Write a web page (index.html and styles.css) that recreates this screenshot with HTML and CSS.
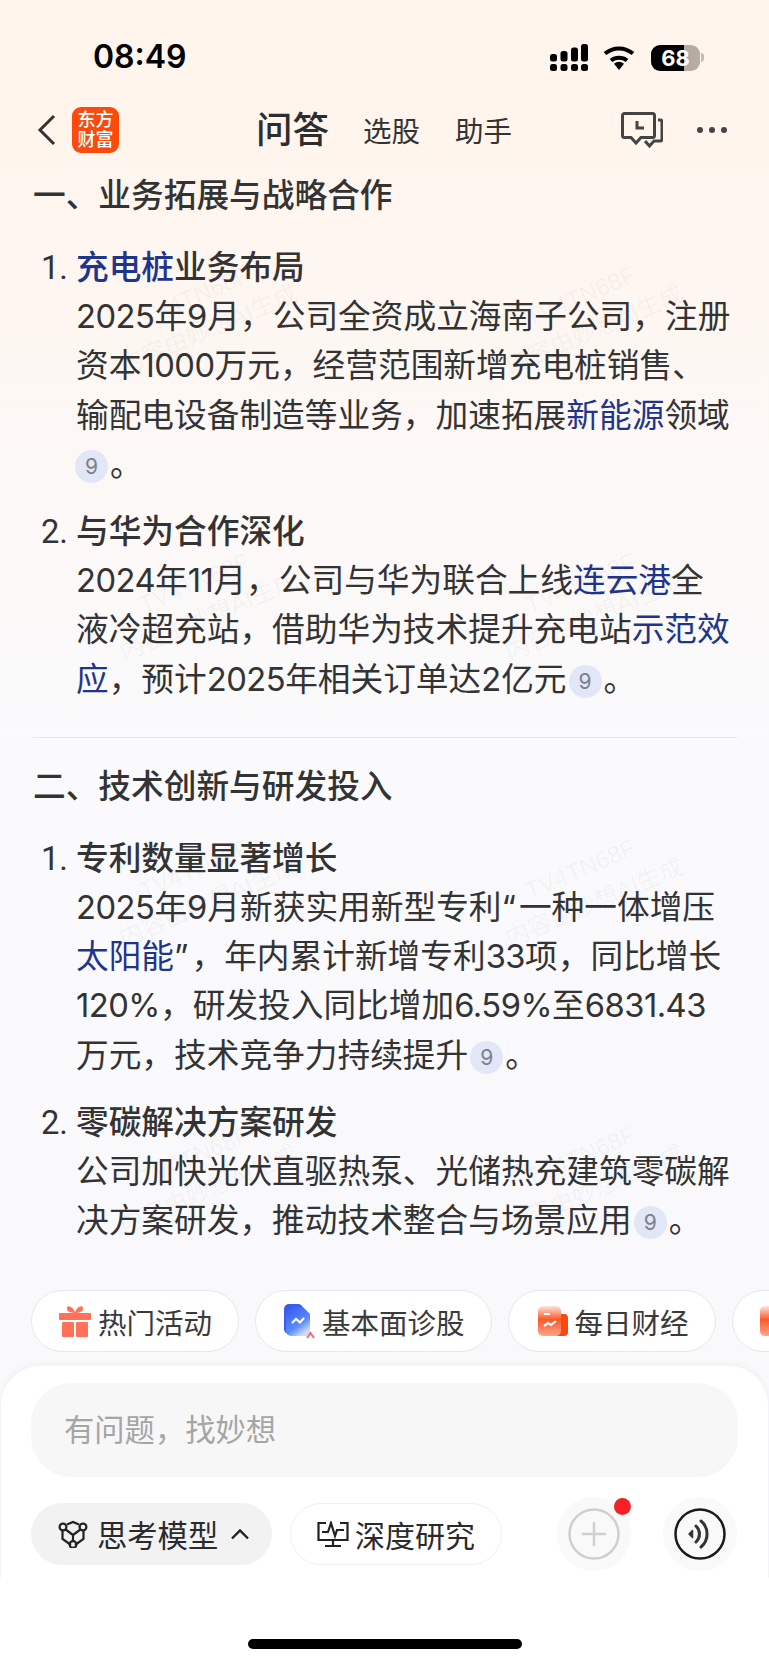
FILE: index.html
```html
<!DOCTYPE html>
<html lang="zh-CN">
<head>
    <meta charset="UTF-8">
    <meta name="viewport" content="width=device-width, initial-scale=1.0">
    <title>问答</title>
    <link rel="stylesheet" href="styles.css">
</head>
<body>
<div class="page">

    <!-- status bar -->
    <div class="status">
        <span class="time">08:49</span>
        <div class="status-icons">
            <svg class="signal" width="38" height="27" viewBox="0 0 38 27">
                <g fill="#000">
                    <rect x="0" y="20" width="7" height="7" rx="2.5"/><rect x="10.5" y="20" width="7" height="7" rx="2.5"/><rect x="21" y="20" width="7" height="7" rx="2.5"/><rect x="31" y="20" width="7" height="7" rx="2.5"/>
                    <rect x="0" y="10" width="7" height="7.5" rx="2.5"/><rect x="10.5" y="7" width="7" height="10.5" rx="2.5"/><rect x="21" y="3.5" width="7" height="14" rx="2.5"/><rect x="31" y="0" width="7" height="17.5" rx="2.5"/>
                </g>
            </svg>
            <svg class="wifi" width="34" height="25" viewBox="0 0 34 25">
                <path d="M17 25l-5-6.2a8 8 0 0 1 10 0z" fill="#000"/>
                <path d="M9 15.5a12.6 12.6 0 0 1 16 0" fill="none" stroke="#000" stroke-width="4"/>
                <path d="M3 8.6a21.6 21.6 0 0 1 28 0" fill="none" stroke="#000" stroke-width="4"/>
            </svg>
            <div class="battery"><span class="battery-num">68</span></div>
            <span class="battery-tip"></span>
        </div>
    </div>

    <!-- nav -->
    <nav class="nav">
        <svg class="back" width="20" height="32" viewBox="0 0 20 32"><path d="M17 2L3 16l14 14" fill="none" stroke="#333" stroke-width="3"/></svg>
        <div class="logo"><span>东方</span><span>财富</span></div>
        <span class="nav-title">问答</span>
        <a class="nav-link nav-link-first">选股</a>
        <a class="nav-link">助手</a>
        <svg class="nav-chat" width="42" height="36" viewBox="0 0 42 36">
            <path d="M3.5 1.5h28a2 2 0 0 1 2 2v20a2 2 0 0 1-2 2H20l-5 5.5-5-5.500H3.500a2 2 0 0 1-2-2v-20a2 2 0 0 1 2-2z" fill="none" stroke="#444" stroke-width="3"/>
            <path d="M37 8h2a2 2 0 0 1 2 2v17a2 2 0 0 1-2 2h-6l-4.500 5-4.500-5" fill="none" stroke="#444" stroke-width="3"/>
            <path d="M16 9v7h7" fill="none" stroke="#444" stroke-width="3"/>
        </svg>
        <div class="nav-more"><i></i><i></i><i></i></div>
    </nav>

    <!-- answer -->
    <main class="answer">
        <h3 class="heading">一、业务拓展与战略合作</h3>
        <ol class="points">
            <li>
                <strong><a class="term">充电桩</a>业务布局</strong><br>
                <span class="num">2025</span>年9月，公司全资成立海南子公司，注册<br>
                资本<span class="num">1000</span>万元，经营范围新增充电桩销售、<br>
                输配电设备制造等业务，加速拓展<a class="term">新能源</a>领域<br>
                <span class="cite cite-lead">9</span>。
            </li>
            <li>
                <strong>与华为合作深化</strong><br>
                <span class="num">2024</span>年<span class="num">11</span>月，公司与华为联合上线<a class="term">连云港</a>全<br>
                液冷超充站，借助华为技术提升充电站<a class="term">示范效</a><br>
                <a class="term">应</a>，预计<span class="num">2025</span>年相关订单达2亿元<span class="cite">9</span>。
            </li>
        </ol>
        <hr class="divider">
        <h3 class="heading">二、技术创新与研发投入</h3>
        <ol class="points">
            <li>
                <strong>专利数量显著增长</strong><br>
                <span class="num">2025</span>年9月新获实用新型专利<span class="quote">“</span>一种一体增压<br>
                <a class="term">太阳能</a><span class="quote">”</span>，年内累计新增专利<span class="num">33</span>项，同比增长<br>
                <span class="num">120%</span>，研发投入同比增加<span class="num">6.59%</span>至<span class="num">6831.43</span><br>
                万元，技术竞争力持续提升<span class="cite">9</span>。
            </li>
            <li>
                <strong>零碳解决方案研发</strong><br>
                公司加快光伏直驱热泵、光储热充建筑零碳解<br>
                决方案研发，推动技术整合与场景应用<span class="cite">9</span>。
            </li>
        </ol>
    </main>

    <!-- quick chips -->
    <div class="chips">
        <div class="chip">
            <svg width="32" height="32" viewBox="0 0 32 32">
                <path d="M15 8C11 8 7 6 8 2.500 9.500-.5 14 2 16 7c2-5 6.500-7.500 8-4.500C25 6 21 8 17 8z" fill="#ff7259"/>
                <rect x="0" y="8" width="32" height="7" rx="1" fill="#ff7259"/>
                <rect x="3" y="17" width="12" height="15" rx="1" fill="#ff7259"/>
                <rect x="17" y="17" width="12" height="15" rx="1" fill="#ff7259"/>
            </svg>
            热门活动
        </div>
        <div class="chip">
            <svg width="32" height="36" viewBox="0 0 32 36">
                <defs><linearGradient id="blueDoc" x1="0" y1="0" x2="0.600" y2="1"><stop offset="0" stop-color="#2f57f0"/><stop offset="0.700" stop-color="#5c8cfa"/><stop offset="1" stop-color="#c9dafd"/></linearGradient></defs>
                <rect x="1" y="1" width="19" height="30" rx="5" fill="#3a5ce8"/>
                <path d="M8 4h12l7 7v17a5 5 0 0 1-5 5H8a5 5 0 0 1-5-5V9a5 5 0 0 1 5-5z" fill="url(#blueDoc)"/>
                <path d="M9 20l4-4 4 3.500 4-4.500" fill="none" stroke="#fff" stroke-width="2.200"/>
                <path d="M24 35l3.500-5 3.500 5" fill="none" stroke="#f4686d" stroke-width="2"/>
            </svg>
            基本面诊股
        </div>
        <div class="chip chip-daily">
            <svg width="30" height="32" viewBox="0 0 30 32">
                <defs><linearGradient id="redDoc" x1="0" y1="0" x2="0" y2="1"><stop offset="0" stop-color="#fde4dc"/><stop offset="0.450" stop-color="#fb5a28"/><stop offset="1" stop-color="#fba48a"/></linearGradient></defs>
                <rect x="16" y="9" width="14" height="22" rx="4" fill="#f9480f"/>
                <rect x="0" y="1" width="23" height="30" rx="5" fill="url(#redDoc)"/>
                <rect x="6" y="8" width="6" height="2" fill="#fff"/>
                <path d="M6 21l4-3 3 2 5-4" fill="none" stroke="#fff" stroke-width="2.200"/>
            </svg>
            每日财经
        </div>
        <div class="chip">
            <svg width="30" height="32" viewBox="0 0 30 32">
                <rect x="16" y="9" width="14" height="22" rx="4" fill="#f9480f"/>
                <rect x="0" y="1" width="23" height="30" rx="5" fill="url(#redDoc)"/>
            </svg>
        </div>
    </div>

    <!-- input panel -->
    <section class="panel">
        <div class="ask">有问题，找妙想</div>
        <div class="tools">
            <div class="tool tool-active">
                <svg width="30" height="28" viewBox="0 0 30 28">
                    <g fill="none" stroke="#222" stroke-width="2.200">
                        <path d="M9 4.500L15 2l6 2.500M25.500 10v9L17 25M13 25l-8.500-6v-9"/>
                        <path d="M7 9l8 6 8-6M15 15v7"/>
                        <circle cx="5" cy="7" r="3.400"/><circle cx="25" cy="7" r="3.400"/><circle cx="15" cy="24.500" r="3.400"/>
                    </g>
                </svg>
                <span>思考模型</span>
                <svg class="tool-caret" width="20" height="12" viewBox="0 0 20 12"><path d="M2 10.500l8-8 8 8" fill="none" stroke="#222" stroke-width="2.400"/></svg>
            </div>
            <div class="tool">
                <svg width="32" height="26" viewBox="0 0 32 26">
                    <path d="M9 2H1.500v17h29V2H23M16 19v6M8 25h16" fill="none" stroke="#222" stroke-width="2.200"/>
                    <path d="M5 11h6l3-9 4 13 2-6h7" fill="none" stroke="#222" stroke-width="2.200"/>
                </svg>
                <span>深度研究</span>
            </div>
            <div class="round round-add">
                <svg width="52" height="52" viewBox="0 0 52 52">
                    <circle cx="26" cy="26" r="24.500" fill="none" stroke="#cfcfcf" stroke-width="2.500"/>
                    <path d="M26 14v24M14 26h24" stroke="#d0d0d0" stroke-width="2.500"/>
                </svg>
                <span class="dot"></span>
            </div>
            <div class="round">
                <svg width="52" height="52" viewBox="0 0 52 52">
                    <circle cx="26" cy="26" r="24.500" fill="none" stroke="#1a1a1a" stroke-width="2.500"/>
                    <path d="M18.500 22.500l-3.500 3.500 3.500 3.500z" fill="#333" stroke="#333" stroke-width="1.500" stroke-linejoin="round"/>
                    <path d="M22 18a11 11 0 0 1 0 16" fill="none" stroke="#333" stroke-width="3" stroke-linecap="round"/>
                    <path d="M27 13a17 17 0 0 1 0 26" fill="none" stroke="#333" stroke-width="3" stroke-linecap="round"/>
                </svg>
            </div>
        </div>
    </section>

    <div class="home"><span class="home-bar"></span></div>

    <!-- watermark tiles sit over the answer -->
    <div class="marks">
        <div class="mark"><span>TV4TN68F</span><span>内容由妙想AI生成</span></div>
        <div class="mark"><span>TV4TN68F</span><span>内容由妙想AI生成</span></div>
        <div class="mark"><span>TV4TN68F</span><span>内容由妙想AI生成</span></div>
        <div class="mark"><span>TV4TN68F</span><span>内容由妙想AI生成</span></div>
        <div class="mark"><span>TV4TN68F</span><span>内容由妙想AI生成</span></div>
        <div class="mark"><span>TV4TN68F</span><span>内容由妙想AI生成</span></div>
        <div class="mark"><span>TV4TN68F</span><span>内容由妙想AI生成</span></div>
        <div class="mark"><span>TV4TN68F</span><span>内容由妙想AI生成</span></div>
    </div>
</div>
</body>
</html>
```

FILE: styles.css
```css
* {
    box-sizing: border-box;
}

body {
    margin: 0;
    padding: 0;
    font-family: Inter, "Noto Sans CJK SC", sans-serif;
    color: #333;
    background-color: #fff;
}

.page {
    position: relative;
    width: 769px;
    height: 1665px;
    overflow: hidden;
    background: linear-gradient(180deg, #fff5ed 0, #fff5ed 130px, #fcf8f5 450px, #fafafd 800px, #f9f9fc 1365px);
}

/* status bar */
.status {
    height: 100px;
    padding: 38px 65px 0 93px;
    display: flex;
    justify-content: space-between;
    align-items: flex-start;
}

.time {
    font-family: Inter, sans-serif;
    font-size: 32px;
    font-weight: 600;
    line-height: 38px;
    color: #000;
}

.status-icons {
    display: flex;
    align-items: center;
    margin-top: 6px;
}

.wifi {
    margin-left: 14px;
}

.battery {
    width: 49px;
    height: 26px;
    margin-left: 15px;
    border-radius: 9px;
    background: linear-gradient(90deg, #000 0, #000 68%, #b5aca4 68%, #b5aca4 100%);
    display: flex;
    align-items: center;
    justify-content: center;
}

.battery-num {
    font-family: Inter, sans-serif;
    font-size: 22px;
    font-weight: 700;
    color: #fff;
}

.battery-tip {
    width: 3px;
    height: 9px;
    margin-left: 1px;
    border-radius: 0 3px 3px 0;
    background-color: #c4bcb5;
}

/* nav */
.nav {
    height: 60px;
    padding-left: 37px;
    display: flex;
    align-items: center;
}

.back {
    flex: none;
}

.logo {
    width: 47px;
    height: 46px;
    margin-left: 15px;
    border-radius: 9px;
    background-color: #fb4a0b;
    color: #fff;
    font-size: 18px;
    font-weight: 500;
    line-height: 20px;
    display: flex;
    flex-direction: column;
    align-items: center;
    justify-content: center;
}

.nav-title {
    margin-left: 137px;
    font-size: 36.500px;
    font-weight: 500;
    color: #2d2d2d;
    line-height: 44px;
}

.nav-link {
    font-size: 28.500px;
    color: #333;
    margin-left: 35px;
    line-height: 40px;
    padding-top: 4px;
}

.nav-link-first {
    margin-left: 34px;
}

.nav-chat {
    margin-left: 109px;
    flex: none;
}

.nav-more {
    margin-left: 34px;
    display: flex;
    gap: 6px;
}

.nav-more i {
    width: 6px;
    height: 6px;
    border-radius: 50%;
    background-color: #444;
}

/* answer */
.answer {
    padding: 11px 32px 0 33px;
    height: 1130px;
    font-size: 32.7px;
    line-height: 49.2px;
    white-space: nowrap;
}

.heading {
    margin: 0;
    font-size: 32.7px;
    font-weight: 500;
    line-height: 49px;
}

.points {
    margin: 23px 0 0;
    padding-left: 43px;
}

.points li {
    margin-bottom: 18px;
}

.points li::marker {
    font-family: Roboto, sans-serif;
}

.points strong {
    font-weight: 500;
}

.num {
    letter-spacing: -0.5px;
}

.quote {
    letter-spacing: 3px;
}

.term {
    color: #1f358c;
}

.cite {
    display: inline-flex;
    align-items: center;
    justify-content: center;
    width: 33px;
    height: 33px;
    margin: 0 2px;
    border-radius: 50%;
    background-color: #e1e7f6;
    color: #7b808a;
    font-size: 21px;
    line-height: 33px;
    vertical-align: 2px;
}

.cite-lead {
    margin-left: -1px;
}

.divider {
    height: 1px;
    margin: 33px 0 24px;
    border: none;
    background-color: #e6e6e8;
}

/* chips */
.chips {
    height: 62px;
    padding-left: 31px;
    display: flex;
    gap: 16px;
}

.chip {
    flex: none;
    height: 62px;
    padding: 0 26px 0 27px;
    display: flex;
    align-items: center;
    gap: 7px;
    border: 1.5px solid #e8e8ea;
    border-radius: 31px;
    background-color: #fff;
    font-size: 28.500px;
    color: #3a3a3a;
}

.chip-daily {
    padding-left: 29px;
}

/* input panel */
.panel {
    height: 213px;
    margin-top: 13px;
    padding: 17px 30px 0;
    border: 1px solid #f3f3f5;
    border-bottom: none;
    border-radius: 40px 40px 0 0;
    background-color: #fff;
    box-shadow: 0 -2px 6px rgba(0, 0, 0, 0.03);
}

.ask {
    height: 94px;
    padding-left: 33px;
    border-radius: 40px;
    background-color: #f7f7f8;
    color: #a5a5a5;
    font-size: 30.3px;
    line-height: 94px;
}

.tools {
    margin-top: 20px;
    display: flex;
    align-items: center;
}

.tool {
    flex: none;
    height: 62px;
    padding: 0 26px;
    display: flex;
    align-items: center;
    gap: 6px;
    border: 1px solid #f0f0f1;
    border-radius: 31px;
    font-size: 30px;
    color: #2a2a2a;
    margin-left: 18px;
    white-space: nowrap;
}

.tool svg {
    flex: none;
}

.tool-active {
    margin-left: 0;
    padding-right: 20px;
    border-color: #f2f2f3;
    background-color: #f2f2f3;
    width: 241px;
    gap: 9px;
    font-size: 30.300px;
}

.tool-caret {
    margin-left: 3px;
}

.round {
    position: relative;
    flex: none;
    width: 74px;
    height: 74px;
    margin-left: 32px;
    border-radius: 50%;
    background-color: #f9f9f9;
    display: flex;
    align-items: center;
    justify-content: center;
}

.round-add {
    margin-left: 55px;
}

.dot {
    position: absolute;
    top: 1px;
    right: 0;
    width: 17px;
    height: 17px;
    border-radius: 50%;
    background-color: #f32024;
}

.home {
    height: 88px;
    background-color: #fff;
    padding-top: 61px;
    display: flex;
    justify-content: center;
    align-items: flex-start;
}

.home-bar {
    width: 274px;
    height: 10px;
    border-radius: 5px;
    background-color: #000;
}

/* watermark */
.marks {
    position: absolute;
    left: 0;
    top: 0;
    width: 769px;
    height: 1150px;
    padding: 277px 0 0 101px;
    display: grid;
    grid-template-columns: repeat(2, 386px);
    grid-auto-rows: 286.5px;
    pointer-events: none;
}

.mark {
    width: 200px;
    height: 70px;
    display: flex;
    flex-direction: column;
    align-items: center;
    transform: rotate(-23deg);
    transform-origin: center;
    color: rgba(0, 0, 0, 0.045);
    font-family: "Liberation Sans", "Noto Sans CJK SC", sans-serif;
    font-size: 24px;
    line-height: 36px;
    white-space: nowrap;
}
```
